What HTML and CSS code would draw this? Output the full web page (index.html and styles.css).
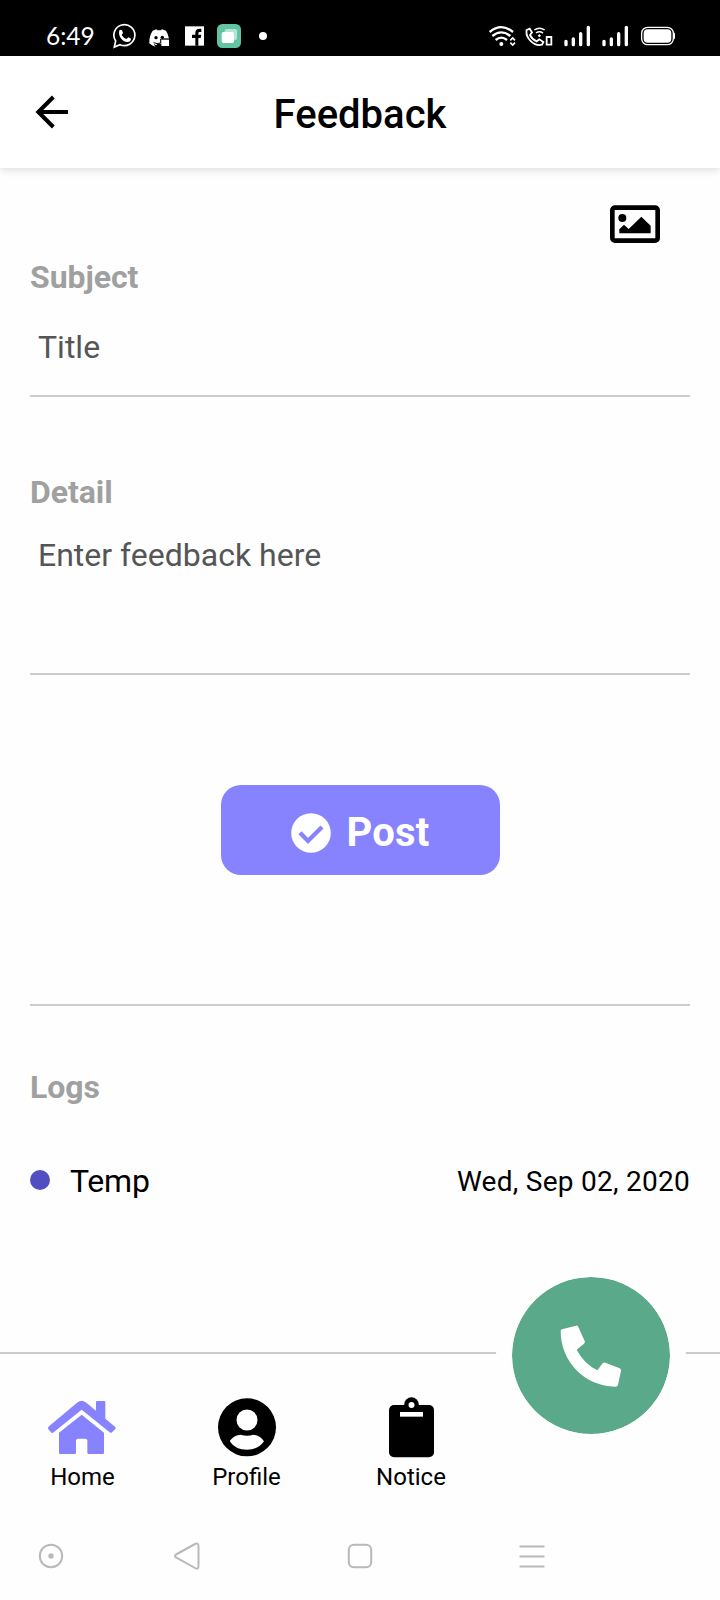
FILE: index.html
```html
<!DOCTYPE html>
<html lang="en">
<head>
<meta charset="utf-8">
<title>Feedback</title>
<link rel="stylesheet" href="styles.css">
</head>
<body>
<div class="screen">
  <div class="status">
    <span class="time">6:49</span>
    <svg class="whatsapp" width="24" height="26" viewBox="337 69 72 78"><path d="M344 141L348 123A31.500 31.500 0 1 1 361 134Z" fill="none" stroke="#fff" stroke-width="5"/><path d="M359 91Q363 87 367 91L370 99L366 105Q371 114 381 117L386 112L394 116Q394 125 384 126C369 127 354 109 359 91Z" fill="#fff"/></svg>
    <svg class="discord" width="21" height="18" viewBox="447 86 63 54"><path d="M458 91L469 87L472 90H482L486 87L498 91Q505 101 507 115H484V130H473L468 135L461 130L466 139Q455 136 448 129Q447 108 458 91Z" fill="#fff"/><circle cx="468" cy="112" r="5"/><circle cx="487" cy="111" r="5"/><path d="M461 127Q471 132 482 128V116H507" fill="none" stroke="#000" stroke-width="3"/><path d="M484 118h23v19h-23z" fill="#fff"/></svg>
    <svg class="fb" width="19" height="20" viewBox="555 78 57 60"><path d="M555 79H612V137H555Z" fill="#fff"/><path d="M586 137V114H576V104H586V98Q586 86 599 86H604V96H599Q595 96 595 100V104H604L602 114H595V137Z"/></svg>
    <svg class="copy" width="24" height="24" viewBox="651 72 72 72"><rect x="651" y="72" width="72" height="72" rx="16" fill="#62c4a3"/><rect x="674" y="87" width="37" height="33" rx="6" fill="#b5e5d5"/><rect x="665" y="96" width="37" height="33" rx="6" fill="#fff"/></svg>
    <span class="more"></span>
    <span class="spacer"></span>
    <svg class="wifi" width="27" height="22" viewBox="386 75 81 66"><g fill="none" stroke="#fff" stroke-width="7"><path d="M388 96Q423 67 458 96M396 108Q423 86 450 108M406 120Q423 106 440 120"/><path d="M450 121L457 114L464 121M450 128L457 135L464 128" stroke-width="5"/></g><circle cx="423" cy="132" r="6" fill="#fff"/></svg>
    <svg class="call" width="28" height="22" viewBox="495 75 84 66"><g fill="none" stroke="#fff" stroke-width="5.500"><path d="M500 90L509 86L516 97L510 105Q516 118 530 124L538 118L550 126L546 134C523 141 495 113 500 90Z"/><path d="M523 90Q538 79 554 90M528 99Q538 92 549 99" stroke-width="4.500"/><path d="M560 111H574V134H560Z"/></g><path d="M538 102L543 107L538 112L533 107Z" fill="#fff"/></svg>
    <svg class="signal" width="27" height="22" viewBox="611 75 81 66"><path d="M617 124V134M639 117V134M661 101V134M684 82V134" stroke="#fff" stroke-width="10" stroke-linecap="round"/></svg>
    <svg class="signal second" width="27" height="22" viewBox="611 75 81 66"><path d="M617 124V134M639 117V134M661 101V134M684 82V134" stroke="#fff" stroke-width="10" stroke-linecap="round"/></svg>
    <svg class="battery" width="34" height="20" viewBox="840 79 102 60"><rect x="842" y="83" width="95" height="52" rx="18" fill="none" stroke="#fff" stroke-width="4"/><rect x="848" y="89" width="83" height="40" rx="12" fill="#fff"/><path d="M937 98Q942 98 942 103V114Q942 119 937 119Z" fill="#fff"/></svg>
  </div>

  <header class="header">
    <svg class="back" width="34" height="34" viewBox="105 285 102 102"><path d="M160 291L115 336L160 381M115 336H204" fill="none" stroke="#000" stroke-width="12"/></svg>
    <h1 class="title">Feedback</h1>
  </header>

  <main class="content">
    <div class="attach"><svg width="50" height="38" viewBox="90 75 150 114"><rect x="97" y="83" width="136" height="99" rx="8" fill="none" stroke="#000" stroke-width="14"/><circle cx="127" cy="114" r="12"/><path d="M118 160V148L132 134L146 147L184 110L212 137V160Z"/></svg></div>
    <section class="field subject">
      <div class="label">Subject</div>
      <div class="input">Title</div>
    </section>
    <section class="field detail">
      <div class="label">Detail</div>
      <div class="input">Enter feedback here</div>
    </section>
    <section class="actions">
      <button class="post"><svg width="40" height="40" viewBox="273 128 120 120"><circle cx="333" cy="188" r="59.500" fill="#fff"/><path d="M300 187L324 212L366 170" fill="none" stroke="#8783ff" stroke-width="13"/></svg><span>Post</span></button>
    </section>
    <section class="logs">
      <div class="label">Logs</div>
      <div class="log"><span class="dot"></span><span class="name">Temp</span><span class="date">Wed, Sep 02, 2020</span></div>
    </section>
  </main>

  <nav class="tabs">
    <div class="tab"><svg width="70" height="62" viewBox="144 168 210 186" fill="#8783ff"><path d="M148 258L233 187Q245 178 257 187L288 212V186Q288 183 291 183H313Q316 183 316 186V236L345 260Q349 264 346 267L336 277Q332 280 329 277L245 209L161 277Q157 281 153 277L145 268Q142 263 148 258Z"/><path d="M245 224L312 278V338Q312 342 308 342H266Q262 342 262 338V302Q262 296 256 296H234Q228 296 228 302V338Q228 342 224 342H181Q177 342 177 338V278Z"/></svg><span>Home</span></div>
    <div class="tab"><svg width="70" height="62" viewBox="636 168 210 186"><circle cx="741" cy="262" r="87"/><circle cx="741" cy="240" r="31.500" fill="#fff"/><path d="M691 301Q703 285 722 284Q741 290 760 284Q780 285 792 304Q775 329 741 329Q706 329 691 306Q689 303 691 301Z" fill="#fff"/></svg><span>Profile</span></div>
    <div class="tab"><svg width="70" height="62" viewBox="1128 168 210 186"><rect x="1167" y="195" width="135" height="157" rx="15"/><circle cx="1234.500" cy="194" r="22"/><circle cx="1234.500" cy="195" r="9" fill="#fff"/><path d="M1200 216H1269V230H1200Z" fill="#fff"/></svg><span>Notice</span></div>
    <div class="fab"><svg width="62" height="62" viewBox="360 556 186 186"><path d="M366 569L408 558Q413 557 415 562L434 604Q436 609 432 612L410 630Q432 672 472 692L488 671Q491 667 496 669L539 686Q544 688 543 693L534 735Q533 741 526 741C436 741 362 667 362 575Q362 570 366 569Z" fill="#fff"/></svg></div>
  </nav>

  <div class="system">
    <svg class="sys-assist" width="28" height="30" viewBox="0 0 28 30"><circle cx="14" cy="15" r="11.200"/><circle cx="14" cy="15" r="2.700" class="solid"/></svg>
    <svg class="sys-back" width="28" height="30" viewBox="0 0 28 30"><path d="M3 13.500L22 3Q25.500 1.500 25.500 5V25Q25.500 29 22 27L3 16.500Q1 15 3 13.500Z"/></svg>
    <svg class="sys-home" width="28" height="30" viewBox="0 0 28 30"><rect x="2.800" y="3.800" width="22.400" height="22.400" rx="5"/></svg>
    <svg class="sys-menu" width="28" height="30" viewBox="0 0 28 30"><path d="M1.500 5.500H26.500M1.500 15.500H26.500M1.500 25.500H26.500"/></svg>
  </div>
</div>
</body>
</html>
```

FILE: styles.css
```css
* { box-sizing: border-box; }
body { margin: 0; background: #fefefe; color: #000; font-family: Roboto, sans-serif; }
svg { display: block; flex: none; }
.screen { width: 720px; height: 1600px; display: flex; flex-direction: column; overflow: hidden; }

.status { height: 56px; flex: none; padding: 16px 45px 0 46px; background: #000; color: #fff; display: flex; align-items: center; }
.time { font: 24.5px/38px Lato, sans-serif; width: 66px; padding-bottom: 1px; white-space: nowrap; }
.discord { margin-left: 13px; margin-top: 3px; }
.fb { margin-left: 15px; }
.copy { margin-left: 13px; }
.more { width: 8px; height: 8px; margin-left: 18px; border-radius: 50%; background: #fff; }
.spacer { flex: 1; }
.call { margin-left: 9px; }
.signal { margin-left: 11px; }
.battery { margin-left: 12px; }

.header { height: 112px; flex: none; padding: 0 35px; background: #fff; box-shadow: 0 2px 8px rgba(0, 0, 0, .13); display: grid; grid-template-columns: 34px 1fr 34px; align-items: center; }
.title { margin: 6px 0 0; font-size: 40px; line-height: 48px; font-weight: 500; text-align: center; }

.content { flex: 1; padding: 37px 30px 0; display: flex; flex-direction: column; }
.attach { display: flex; justify-content: flex-end; padding-right: 30px; }
.label { font-size: 32px; line-height: 38px; font-weight: 700; letter-spacing: -.05px; color: #a0a0a0; }
.input { padding-left: 8px; font-size: 32px; line-height: 38px; color: #555; }
.field { border-bottom: 2px solid #ccc; }
.subject { margin-top: 15px; height: 139px; display: flex; flex-direction: column; gap: 32px; }
.detail { margin-top: 76px; height: 202px; display: flex; flex-direction: column; gap: 25px; }
.actions { height: 331px; padding-top: 110px; border-bottom: 2px solid #ccc; display: flex; justify-content: center; align-items: flex-start; }
.post { width: 279px; height: 90px; padding: 6px 0 0; border: 0; border-radius: 20px; background: #8783ff; color: #fff; font: 700 40px/48px Roboto, sans-serif; letter-spacing: .2px; display: flex; align-items: center; justify-content: center; gap: 16px; }
.logs { padding-top: 62px; }
.log { margin-top: 56px; height: 38px; display: flex; align-items: center; }
.dot { width: 20px; height: 20px; margin-bottom: 2px; border-radius: 50%; background: #514dc3; }
.name { margin-left: 20px; font-size: 32px; line-height: 38px; letter-spacing: -.2px; }
.date { margin-left: auto; padding-top: 2px; font-size: 28px; line-height: 36px; letter-spacing: .27px; }

.tabs { position: relative; height: 150px; flex: none; padding: 42px 0 0; border-top: 2px solid #ccc; display: grid; grid-template-columns: 165px 163px 166px; }
.tab { display: flex; flex-direction: column; align-items: center; font-size: 24px; line-height: 28px; }
.tab span { margin-top: 5px; }
.fab { position: absolute; left: 496px; top: -93px; width: 190px; height: 189px; border: 16px solid #fefefe; border-radius: 50%; background: #5aa98a; background-clip: padding-box; display: flex; align-items: center; justify-content: center; }

.system { height: 98px; flex: none; padding: 39px 0 0 37px; display: flex; }
.system svg { fill: none; stroke: #b9b9b9; stroke-width: 2; }
.system .solid { fill: #b9b9b9; stroke: none; }
.sys-back { margin-left: 108px; }
.sys-home { margin-left: 145px; }
.sys-menu { margin-left: 144px; }
```
